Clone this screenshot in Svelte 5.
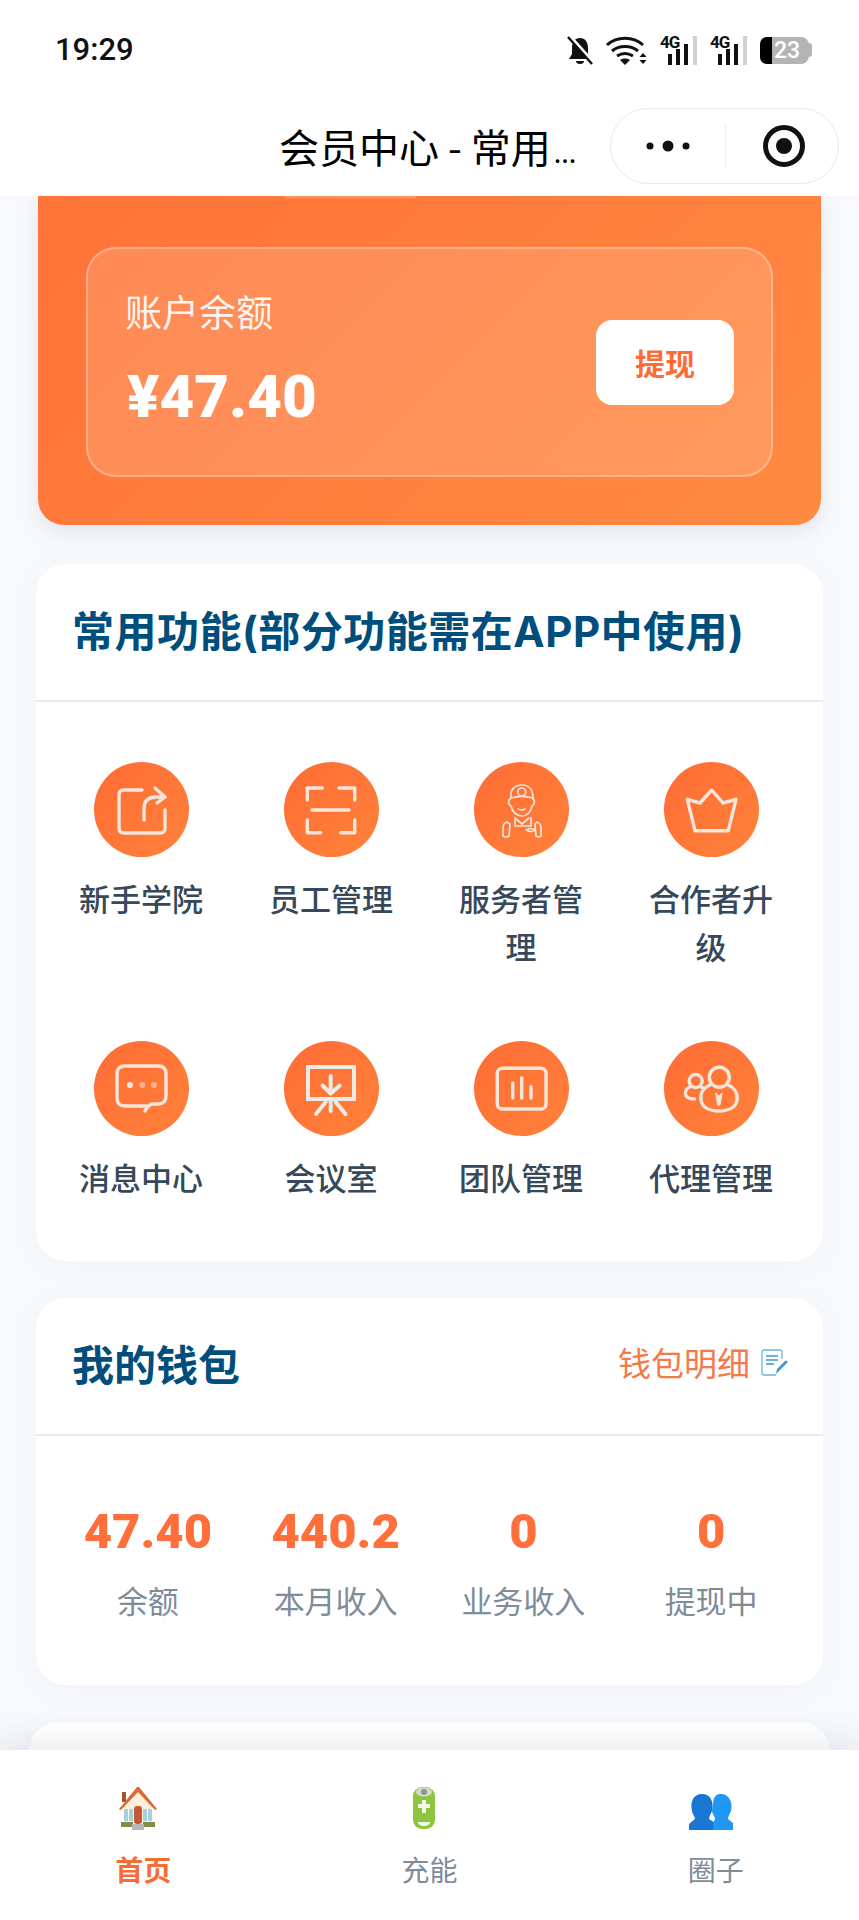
<script>
  const tools = [
    { name: '新手学院', icon: 'share' },
    { name: '员工管理', icon: 'scan' },
    { name: '服务者管理', icon: 'worker' },
    { name: '合作者升级', icon: 'crown' },
    { name: '消息中心', icon: 'message' },
    { name: '会议室', icon: 'meeting' },
    { name: '团队管理', icon: 'chart' },
    { name: '代理管理', icon: 'agents' }
  ];

  const stats = [
    { value: '47.40', label: '余额' },
    { value: '440.2', label: '本月收入' },
    { value: '0', label: '业务收入' },
    { value: '0', label: '提现中' }
  ];
</script>

{#snippet signal()}
  <span class="signal">
    <span class="net">4G</span>
    <svg width="37" height="29" viewBox="0 0 37 29">
      <rect x="8" y="18" width="4" height="11" fill="#111" />
      <rect x="16" y="13" width="4" height="16" fill="#111" />
      <rect x="24" y="8" width="4" height="21" fill="#111" />
      <rect x="33" y="0" width="4" height="29" fill="#d2d2d2" />
    </svg>
  </span>
{/snippet}

<div class="page">
  <header class="status">
    <span class="time">19:29</span>
    <div class="status-icons">
      <svg width="26" height="29" viewBox="0 0 26 29">
        <path d="M13 2c-5 0-8 4-8 10v6l-3 5h22l-3-5v-6c0-6-3-10-8-10z" fill="#111" />
        <path d="M9 25h8a4 3 0 0 1-8 0z" fill="#111" />
        <path d="M3 0l24 27" stroke="#fff" stroke-width="3" />
        <path d="M1 1l24 27" stroke="#111" stroke-width="2.400" />
      </svg>
      <svg width="41" height="29" viewBox="0 0 41 29">
        <g fill="none" stroke="#111" stroke-width="3">
          <path d="M1 9c10-9 26-9 36 0" />
          <path d="M6 15c7-6 19-6 26 0" />
          <path d="M11 20c5-3 11-3 16 0" />
        </g>
        <path d="M14 24c3-2 7-2 10 0l-5 5z" fill="#111" />
        <path d="M37 17l-3.500 4h7zM37 28l-3.500-4h7z" fill="#111" />
      </svg>
      {@render signal()}
      {@render signal()}
      <div class="battery">
        <div class="cell">
          <span class="level"></span>
          <span class="percent">23</span>
        </div>
        <span class="nub"></span>
      </div>
    </div>
  </header>

  <nav class="navbar">
    <div class="title">会员中心 - 常用<span class="more">...</span></div>
    <div class="capsule">
      <svg class="dots" width="44" height="12" viewBox="0 0 44 12">
        <circle cx="4" cy="6" r="3.500" fill="#111" />
        <circle cx="22" cy="6" r="5.500" fill="#111" />
        <circle cx="40" cy="6" r="3.500" fill="#111" />
      </svg>
      <span class="divider"></span>
      <svg class="target" width="44" height="44" viewBox="0 0 44 44">
        <circle cx="22" cy="22" r="18.500" fill="none" stroke="#111" stroke-width="5" />
        <circle cx="22" cy="22" r="8" fill="#111" />
      </svg>
    </div>
  </nav>

  <main class="content">
    <section class="hero">
      <div class="balance">
        <div>
          <div class="balance-label">账户余额</div>
          <div class="balance-amount">¥47.40</div>
        </div>
        <button class="withdraw">提现</button>
      </div>
    </section>

    <section class="card tools-card">
      <div class="card-head">
        <h2>常用功能(部分功能需在APP中使用)</h2>
      </div>
      <div class="tools">
        {#each tools as tool}
          <div class="tool">
            <div class="tool-icon">
              <svg width="95" height="95" viewBox="0 0 95 95" fill="none" stroke="#f5e6dc" stroke-width="3.400" stroke-linecap="round" stroke-linejoin="round">
                {#if tool.icon === 'share'}
                  <path d="M48 28H30q-5 0-5 5v33q0 5 5 5h36q5 0 5-5V48" />
                  <path d="M50 58V47q0-12 12-12h9" />
                  <path d="M61 26l10 9-8 6" />
                {:else if tool.icon === 'scan'}
                  <path d="M23.300 38V26h15M55 26h15.700v12M28 48h37M23.300 58v12.700h13.400M56.700 70.700h14V58" />
                {:else if tool.icon === 'worker'}
                  <g stroke-width="1.700">
                    <path d="M37 36c-1-9 4-13 11-13s11 5 11 13c-7-2-15-2-22 0z" />
                    <circle cx="47.700" cy="30" r="4" />
                    <path d="M36 37c-2 1-2 6 1 7 1 6 6 10 11 10s9-4 10-10c3-1 3-6 1-7" />
                    <path d="M44 47q4 2 7 0" />
                    <path d="M33 60c-3 1-4 3-4 6v8q3 2 6 0l1-12zM63 60c3 1 4 3 4 6v8q-3 2-5 0l-1-12z" />
                    <path d="M41 56v8h16v-8M41 56l7 6 7-6M52 68q5-3 9 0q-3 3-9 0z" />
                  </g>
                {:else if tool.icon === 'crown'}
                  <path d="M23.300 37.300L36 41l11.700-13L59 41l13-3.700-7.700 31.400H31z" />
                {:else if tool.icon === 'message'}
                  <path d="M52 65H31q-8 0-8-8V33q0-8 8-8h33q8 0 8 8v22q0 8-8 8h-6q-4 1-7 7" />
                  <circle cx="36" cy="44" r="3" fill="#f5e6dc" stroke="none" />
                  <circle cx="48.300" cy="44" r="3" fill="#f5e6dc" stroke="none" opacity="0.5" />
                  <circle cx="60" cy="44" r="3" fill="#f5e6dc" stroke="none" opacity="0.5" />
                {:else if tool.icon === 'meeting'}
                  <g stroke="#eeeae6">
                    <path d="M24 26h46v32H24z" stroke-width="4" stroke-linecap="butt" stroke-linejoin="miter" />
                    <path d="M46.700 35v17M38.500 44.500l8.200 8 9-8" stroke-width="4" />
                    <path d="M46.700 60v10M41.700 61L32 73M51.700 61L61.500 73" stroke-width="4" />
                  </g>
                {:else if tool.icon === 'chart'}
                  <rect x="23.300" y="27.300" width="48.700" height="40.700" rx="5" />
                  <path d="M38.700 42v15M47.700 37v20M57 45.700V57" />
                {:else if tool.icon === 'agents'}
                  <circle cx="55.300" cy="36.300" r="10" />
                  <path d="M46 44c-7 3-10 9-9 15 1 7 8 11 18 11s17-4 18-11c1-6-2-12-9-15" />
                  <path d="M52 52l3 3 3-3-2 12h-2z" fill="#f5e6dc" stroke-width="1" />
                  <circle cx="31.700" cy="40" r="6.500" />
                  <path d="M26 46c-3 1-5 4-4.500 7 .5 3 4 5 9 5M37 46l2 1" />
                {/if}
              </svg>
            </div>
            <div class="tool-name">{tool.name}</div>
          </div>
        {/each}
      </div>
    </section>

    <section class="card wallet-card">
      <div class="card-head spread">
        <h2>我的钱包</h2>
        <div class="wallet-link">
          <span>钱包明细</span>
          <svg width="28" height="28" viewBox="0 0 28 28" fill="none">
            <path d="M22 11V4q0-2-2-2H4Q2 2 2 4v21q0 2 2 2h12" stroke="#6db3da" stroke-width="1.300" />
            <path d="M6 8h12M6 12h12M6 16h8" stroke="#3f97cf" stroke-width="1.500" />
            <path d="M16 26l1-5 8-8q1-1 2 0t0 2l-8 8z" fill="#3f97cf" />
          </svg>
        </div>
      </div>
      <div class="stats">
        {#each stats as stat}
          <div class="stat">
            <div class="stat-value">{stat.value}</div>
            <div class="stat-label">{stat.label}</div>
          </div>
        {/each}
      </div>
    </section>

    <section class="card next-card"></section>
  </main>

  <footer class="tabbar">
    <div class="tab active">
      <svg class="tab-icon" width="44" height="44" viewBox="0 0 44 44">
        <path d="M6 6h4v10H6z" fill="#a9522f" />
        <path d="M8 20L22 5l14 15v20H8z" fill="#fdf0d8" />
        <path d="M3 23L21 1h2l18 22-2 1L22 6 5 24z" fill="#d96a3a" />
        <rect x="8" y="23" width="9" height="12" fill="#a8d0dc" />
        <rect x="27" y="23" width="9" height="12" fill="#a8d0dc" />
        <path d="M12.500 23v12M31.500 23v12" stroke="#fff" stroke-width="1" />
        <rect x="18" y="20" width="8" height="18" rx="3" fill="#c05a3a" />
        <rect x="5" y="36" width="12" height="5" fill="#7d8f45" />
        <rect x="27" y="36" width="12" height="5" fill="#7d8f45" />
        <rect x="16" y="38" width="12" height="6" fill="#b8b8b8" />
      </svg>
      <span>首页</span>
    </div>
    <div class="tab">
      <svg class="tab-icon" width="44" height="44" viewBox="0 0 44 44">
        <rect x="11" y="1" width="22" height="42" rx="9" fill="#8cc63f" />
        <ellipse cx="22" cy="6" rx="8" ry="4.500" fill="#d4d8cc" />
        <circle cx="22" cy="6" r="3" fill="#8e9488" />
        <path d="M20 14h4v4h4v4h-4v5h-4v-5h-4v-4h4z" fill="#f2f8e4" />
        <path d="M16 36h12q0 4-6 4t-6-4z" fill="#f2f8e4" />
      </svg>
      <span>充能</span>
    </div>
    <div class="tab">
      <svg class="tab-icon" width="44" height="44" viewBox="0 0 44 44">
        <path d="M13 8c9 0 12 8 10 17-1 3-3 5-3 8l8 5v6H0V38l6-5c0-3-3-5-3-8C1 16 4 8 13 8z" fill="#1976d2" />
        <path d="M32 8c8 0 12 8 10 17-1 3-3 5-3 8l5 4v7H24v-6l2-5c0-3-3-5-3-8 2-9 0-17 9-17z" fill="#2196f3" />
      </svg>
      <span>圈子</span>
    </div>
  </footer>
</div>

<style>
  :global(body) {
    margin: 0;
    background: #f7f9fc;
  }

  .page {
    width: 859px;
    height: 1920px;
    display: flex;
    flex-direction: column;
    overflow: hidden;
    background: #f7f9fc;
    font-family: "Noto Sans CJK SC", "Noto Sans", sans-serif;
  }

  .status {
    height: 100px;
    flex: none;
    display: flex;
    align-items: center;
    justify-content: space-between;
    padding: 0 47px 0 55px;
    box-sizing: border-box;
    background: #fff;
  }

  .time {
    font-family: Roboto, sans-serif;
    font-size: 31px;
    font-weight: 500;
    color: #111;
    margin-top: -2px;
  }

  .status-icons {
    display: flex;
    align-items: center;
    gap: 13px;
  }

  .signal {
    position: relative;
    display: block;
    width: 37px;
    height: 29px;
  }

  .signal svg {
    display: block;
  }

  .net {
    position: absolute;
    left: 0;
    top: -1px;
    font-family: Roboto, sans-serif;
    font-size: 17px;
    font-weight: 700;
    letter-spacing: -1px;
    color: #111;
    line-height: 14px;
  }

  .battery {
    display: flex;
    align-items: center;
    width: 52px;
  }

  .cell {
    width: 49px;
    height: 27px;
    border-radius: 7px 8px 8px 7px;
    background: #b4b4b4;
    overflow: hidden;
    display: flex;
    align-items: center;
  }

  .nub {
    width: 3px;
    height: 14px;
    border-radius: 0 3px 3px 0;
    background: #b4b4b4;
  }

  .level {
    width: 12px;
    height: 100%;
    background: #000;
  }

  .percent {
    margin-left: 2px;
    font-family: Roboto, sans-serif;
    font-size: 23px;
    font-weight: 500;
    line-height: 27px;
    color: #fff;
  }

  .navbar {
    height: 96px;
    flex: none;
    display: flex;
    align-items: center;
    padding: 0 20px 0 279px;
    box-sizing: border-box;
    background: #fff;
    position: relative;
    z-index: 2;
  }

  .title {
    flex: none;
    white-space: nowrap;
    font-size: 40px;
    color: #000;
    margin-top: -4px;
  }

  .more {
    font-size: 27px;
    margin-left: 3px;
  }

  .capsule {
    margin-left: auto;
    margin-top: -4px;
    width: 229px;
    height: 76px;
    box-sizing: border-box;
    border: 1px solid #e9e9e9;
    border-radius: 38px;
    display: flex;
    align-items: center;
  }

  .dots {
    margin-left: 35px;
  }

  .divider {
    width: 1px;
    height: 46px;
    background: #eee;
    margin-left: 35px;
  }

  .target {
    margin-left: 36px;
  }

  .content {
    flex: 1;
    min-height: 0;
    overflow: hidden;
  }

  .hero {
    position: relative;
    height: 329px;
    margin: 0 38px;
    padding-top: 51px;
    box-sizing: border-box;
    background: linear-gradient(135deg, #ff7338, #ff8a42);
    border-radius: 0 0 26px 26px;
    box-shadow: 0 6px 20px rgba(120, 120, 140, 0.16);
  }

  .hero::before {
    content: '';
    position: absolute;
    top: 0;
    left: 247px;
    width: 131px;
    height: 2px;
    background: rgba(255, 255, 255, 0.2);
  }

  .balance {
    height: 230px;
    margin: 0 48px;
    padding: 0 37px 6px 39px;
    box-sizing: border-box;
    display: flex;
    align-items: center;
    justify-content: space-between;
    background: rgba(255, 255, 255, 0.15);
    border: 2px solid rgba(255, 255, 255, 0.3);
    border-radius: 30px;
  }

  .balance-label {
    margin-left: -2px;
    font-size: 37px;
    line-height: 50px;
    color: rgba(255, 255, 255, 0.92);
  }

  .balance-amount {
    margin-top: 26px;
    font-family: Roboto, sans-serif;
    font-size: 60px;
    font-weight: 900;
    line-height: 70px;
    color: #fff;
  }

  .withdraw {
    width: 138px;
    height: 85px;
    margin-top: 6px;
    border: none;
    border-radius: 16px;
    background: #fff;
    color: #ff6b35;
    font-family: inherit;
    font-size: 30px;
    font-weight: 700;
    padding: 0;
  }

  .card {
    margin: 39px 36px 0;
    background: #fff;
    border-radius: 30px;
    box-shadow: 0 4px 24px rgba(160, 170, 190, 0.05);
  }

  .card-head {
    height: 138px;
    padding: 0 37px 8px 36px;
    box-sizing: border-box;
    display: flex;
    align-items: center;
    border-bottom: 2px solid #e3edf1;
  }

  .card-head h2 {
    margin: 0;
    font-family: Inter, "Noto Sans CJK SC", sans-serif;
    font-size: 42px;
    font-weight: 700;
    color: #004e7c;
    white-space: nowrap;
  }

  .tools-card h2 {
    letter-spacing: 0.5px;
  }

  .spread {
    justify-content: space-between;
  }

  .tools {
    display: grid;
    grid-template-columns: repeat(4, 1fr);
    row-gap: 71px;
    padding: 60px 17px 60px 10px;
  }

  .tool {
    display: flex;
    flex-direction: column;
    align-items: center;
  }

  .tool-icon {
    width: 95px;
    height: 95px;
    border-radius: 50%;
    background: linear-gradient(135deg, #ff6c35, #ff823a);
  }

  .tool-icon svg {
    display: block;
  }

  .tool-name {
    margin-top: 17px;
    max-width: 140px;
    min-height: 48px;
    font-size: 31px;
    font-weight: 500;
    line-height: 48px;
    text-align: center;
    color: #36485a;
  }

  .wallet-card {
    margin-top: 37px;
  }

  .wallet-link {
    display: flex;
    align-items: center;
    gap: 10px;
    margin-right: -2px;
    font-size: 33px;
    color: #f47a4a;
  }

  .stats {
    display: grid;
    grid-template-columns: repeat(4, 1fr);
    padding: 66px 18px 63px;
  }

  .stat {
    text-align: center;
  }

  .stat-value {
    font-family: Roboto, sans-serif;
    font-size: 49px;
    font-weight: 900;
    line-height: 60px;
    color: #ff6f3c;
  }

  .stat-label {
    margin-top: 16px;
    font-size: 31px;
    line-height: 44px;
    color: #7f8c9a;
  }

  .next-card {
    margin: 37px 29px 0;
    height: 200px;
  }

  .tabbar {
    height: 170px;
    flex: none;
    position: relative;
    display: grid;
    grid-template-columns: repeat(3, 1fr);
    background: #fff;
    box-shadow: 0 -6px 30px rgba(60, 70, 90, 0.12);
  }

  .tab {
    display: flex;
    flex-direction: column;
    align-items: center;
    padding-top: 36px;
    font-size: 28px;
    line-height: 40px;
    color: #7f8c9a;
  }

  .tab-icon {
    margin-left: -10px;
    margin-bottom: 19px;
  }

  .active {
    color: #f46c36;
    font-weight: 700;
  }
</style>
